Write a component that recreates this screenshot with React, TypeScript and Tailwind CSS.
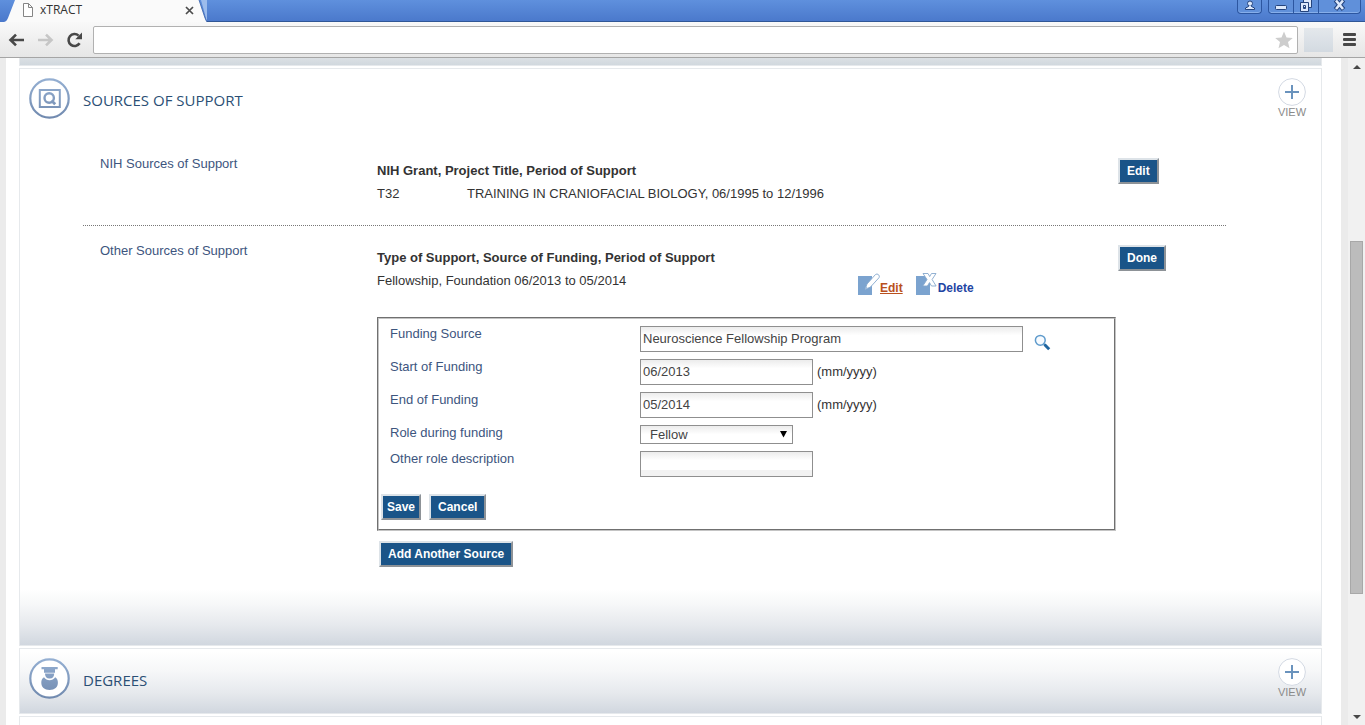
import { useState } from "react";
import type { ReactNode } from "react";

function ActionButton({ children, tight = false }: { children: ReactNode; tight?: boolean }) {
  return (
    <button
      type="button"
      className={`h-[26px] border-2 border-t-[#dde3e8] border-l-[#dde3e8] border-r-[#8d9297] border-b-[#8d9297] bg-[#1a5488] pb-px text-[12px] leading-5 font-bold whitespace-nowrap text-white ${
        tight ? "px-1" : "px-[7px]"
      }`}
    >
      {children}
    </button>
  );
}

function ViewButton() {
  return (
    <button type="button" className="flex w-8 flex-col items-center text-[11px] leading-3 text-[#8a8a8a]">
      <svg width="28" height="28" viewBox="0 0 28 28" aria-hidden="true">
        <circle cx="14" cy="14" r="13.4" fill="#fff" stroke="#d3d9e3" strokeWidth="1" />
        <path d="M7 14h14M14 7v14" stroke="#6a93bd" strokeWidth="2" />
      </svg>
      <span>VIEW</span>
    </button>
  );
}

function SupportIcon() {
  return (
    <svg width="41" height="41" viewBox="0 0 41 41" fill="none" aria-hidden="true">
      <defs>
        <linearGradient id="support" x1="0" y1="0" x2="0" y2="41" gradientUnits="userSpaceOnUse">
          <stop stopColor="#95b0d3" />
          <stop offset="1" stopColor="#7089ae" />
        </linearGradient>
      </defs>
      <circle cx="20.5" cy="20.5" r="19.2" fill="#fff" stroke="url(#support)" strokeWidth="2.2" />
      <path d="M10.8 12h20v17h-20z" stroke="url(#support)" strokeWidth="2" />
      <circle cx="20.2" cy="20" r="4.7" stroke="url(#support)" strokeWidth="2.4" />
      <path d="M22.4 22.4l3.8 3.8" stroke="url(#support)" strokeWidth="2.8" />
    </svg>
  );
}

function DegreeIcon() {
  return (
    <svg width="41" height="41" viewBox="0 0 41 41" fill="none" aria-hidden="true">
      <defs>
        <linearGradient id="degree" x1="0" y1="0" x2="0" y2="41" gradientUnits="userSpaceOnUse">
          <stop stopColor="#95b0d3" />
          <stop offset="1" stopColor="#7089ae" />
        </linearGradient>
      </defs>
      <circle cx="20.5" cy="20.5" r="19.2" fill="#fff" stroke="url(#degree)" strokeWidth="2.2" />
      <path d="M12.500 9h16.200v2.200H26v3.600H15v-3.600h-2.500z" fill="url(#degree)" />
      <path d="M16 15.600h9.200c0 3-1.500 5-4.600 5s-4.600-2-4.600-5z" fill="url(#degree)" />
      <path d="M15 19.300c1.300 2 3.400 2.900 5.600 2.900s4.300-.9 5.600-2.900c2 1.200 2.700 3.200 2.700 5.500 0 4.400-3.200 7.200-8.300 7.200s-8.300-2.800-8.300-7.200c0-2.300.7-4.300 2.700-5.500z" fill="url(#degree)" />
    </svg>
  );
}

function SectionHeader({ title, icon }: { title: string; icon: ReactNode }) {
  return (
    <header className="flex items-start pt-[9px] pr-[13px] pl-[9px]">
      {icon}
      <h2 className="mt-2.5 ml-[13px] font-['Open_Sans','Noto_Sans',sans-serif] text-[15px] leading-6 text-[#2b4f75]">
        {title}
      </h2>
      <div className="ml-auto">
        <ViewButton />
      </div>
    </header>
  );
}

const boxClass =
  "h-[26px] border border-[#8f8f8f] bg-linear-to-b from-[#ececec] to-white to-35% px-0.5 pb-0.5 text-[13px] text-[#444]";
const labelClass = "w-[250px] shrink-0 text-[#3d557e]";

function BrowserBar() {
  return (
    <div className="shrink-0">
      <div className="flex h-[22px] items-stretch bg-linear-to-b from-[#5f90dd] to-[#4a78cb]">
        <svg width="14" height="22" viewBox="0 0 14 22" className="ml-1" aria-hidden="true">
          <path d="M0 22c2-.6 3-1.500 4-4L11 0h3v22z" fill="#fafafa" />
        </svg>
        <div className="flex w-[180px] items-center bg-[#fafafa] pr-1 pb-0.5 pl-1">
          <svg width="12" height="14" viewBox="0 0 12 14" fill="#fff" stroke="#858585" aria-hidden="true">
            <path d="M1.500.5h5l4 4v9h-9zM6.500.5v4h4" />
          </svg>
          <span className="ml-1.5 font-['Open_Sans','Noto_Sans',sans-serif] text-[12px] leading-4 text-[#333]">xTRACT</span>
          <button type="button" aria-label="Close tab" className="ml-auto">
            <svg width="9" height="9" viewBox="0 0 9 9" stroke="#4c4c4c" strokeWidth="1.700" aria-hidden="true">
              <path d="M1 1l7 7M8 1L1 8" />
            </svg>
          </button>
        </div>
        <svg width="9" height="22" viewBox="0 0 9 22" aria-hidden="true">
          <path d="M3 0h6v22z" fill="#9cbcec" />
          <path d="M0 0h1l6 18c.5 2 1 3 2 4H0z" fill="#fafafa" />
          <path d="M1 0l6 18 2 4" fill="none" stroke="#3c64a9" strokeWidth=".8" />
        </svg>
        <div className="flex grow items-start justify-end border-b border-[#315796] pr-1">
          <button
            type="button"
            aria-label="Profile"
            className="mr-1.5 flex h-3.5 w-[25px] items-start justify-center rounded-b border border-t-0 border-[#2c56a0] bg-[#6090da] shadow-[inset_0_-1px_0_#86aeea]"
          >
            <svg width="12" height="11" viewBox="0 0 12 11" fill="#dce8fb" stroke="#24437c" aria-hidden="true">
              <path d="M1.500 9.500V8L4.500 6.500h3L10.500 8v1.500z" />
              <circle cx="6" cy="3.500" r="2.500" />
              <path d="M5 5.500h2v1.500H5z" stroke="none" />
            </svg>
          </button>
          <div className="flex h-3.5 divide-x divide-[#2c56a0] overflow-hidden rounded-b border border-t-0 border-[#2c56a0] bg-[#6090da] shadow-[inset_0_-1px_0_#86aeea]">
            <button type="button" aria-label="Minimize" className="flex w-[25px] items-start justify-center">
              <svg width="13" height="12" viewBox="0 0 13 12" aria-hidden="true">
                <rect x=".5" y="5.500" width="11" height="4" rx="1" fill="#dce8fb" stroke="#24437c" />
              </svg>
            </button>
            <button type="button" aria-label="Restore" className="flex w-[25px] items-start justify-center">
              <svg width="14" height="13" viewBox="0 0 14 13" fill="#dce8fb" stroke="#24437c" aria-hidden="true">
                <path d="M4.500-2.500h8v10h-8z" />
                <path d="M1.500 2.500h8v9h-8zM4.500 5.500h2v3h-2z" fillRule="evenodd" />
              </svg>
            </button>
            <button type="button" aria-label="Close window" className="flex w-[41px] items-start justify-center">
              <svg width="14" height="11" viewBox="0 0 14 11" aria-hidden="true">
                <path d="M2.500 0l8 9.500M10.500 0l-8 9.500" stroke="#24437c" strokeWidth="4.600" />
                <path d="M3 .5L10 9M10 .5L3 9" stroke="#dce8fb" strokeWidth="2.600" />
              </svg>
            </button>
          </div>
        </div>
      </div>
      <div className="flex h-9 items-center border-b border-[#a5a5a5] bg-linear-to-b from-[#f9f9f9] to-[#e6e6e6] pr-[9px] pl-2">
        <button type="button" aria-label="Back">
          <svg width="17" height="14" viewBox="0 0 17 14" fill="none" stroke="#484848" strokeWidth="2.600" aria-hidden="true">
            <path d="M16 7H3M8 1.600L2.500 7 8 12.400" />
          </svg>
        </button>
        <button type="button" aria-label="Forward" className="ml-3">
          <svg width="17" height="14" viewBox="0 0 17 14" fill="none" stroke="#c6c6c6" strokeWidth="2.600" aria-hidden="true">
            <path d="M1 7h13M9 1.600L14.500 7 9 12.400" />
          </svg>
        </button>
        <button type="button" aria-label="Reload" className="ml-3">
          <svg width="17" height="16" viewBox="0 0 17 16" aria-hidden="true">
            <path d="M13.600 11.300A6 6 0 1 1 12.600 3.600" fill="none" stroke="#484848" strokeWidth="2.600" />
            <path d="M16 .5v6.700H9.300z" fill="#484848" />
          </svg>
        </button>
        <div className="ml-2.5 flex h-7 grow items-center rounded-xs border border-[#b1b1b1] bg-white pr-1">
          <input aria-label="Address" className="h-full min-w-0 grow px-2 text-[13px] outline-none" />
          <button type="button" aria-label="Bookmark">
            <svg width="18" height="18" viewBox="0 0 18 18" fill="#cdcdcd" aria-hidden="true">
              <path d="M9 .5l2.500 5.900 6.300.5-4.800 4.100 1.500 6.300L9 14l-5.500 3.300L5 11 .2 6.900l6.300-.5z" />
            </svg>
          </button>
        </div>
        <div className="ml-1.5 h-6 w-[29px] bg-linear-to-b from-[#e4e8ec] to-[#d3dae1]" />
        <button type="button" aria-label="Menu" className="ml-2.5">
          <svg width="13" height="13" viewBox="0 0 13 13" fill="#484848" aria-hidden="true">
            <rect width="13" height="3" rx="1" />
            <rect y="5" width="13" height="3" rx="1" />
            <rect y="10" width="13" height="3" rx="1" />
          </svg>
        </button>
      </div>
    </div>
  );
}

function ScrollBar() {
  return (
    <div className="flex w-[17px] shrink-0 flex-col items-center bg-[#f1f1f1]">
      <button type="button" aria-label="Scroll up" className="flex h-[17px] w-full items-center justify-center">
        <svg width="8" height="4" viewBox="0 0 8 4" fill="#484848" aria-hidden="true">
          <path d="M4 0l4 4H0z" />
        </svg>
      </button>
      <div className="grow-[167]" />
      <div className="w-[13px] grow-[352] border border-[#a8a8a8] bg-[#bcbcbc]" />
      <div className="grow-[114]" />
      <button type="button" aria-label="Scroll down" className="flex h-[17px] w-full items-center justify-center">
        <svg width="8" height="4" viewBox="0 0 8 4" fill="#484848" aria-hidden="true">
          <path d="M4 4L0 0h8z" />
        </svg>
      </button>
    </div>
  );
}

function FundingForm() {
  const [source, setSource] = useState("Neuroscience Fellowship Program");
  const [start, setStart] = useState("06/2013");
  const [end, setEnd] = useState("05/2014");
  const [role, setRole] = useState("Fellow");
  const [other, setOther] = useState("");
  return (
    <form className="mt-[21px] border-2 border-[#c4c4c4] pt-[7px] pb-[9px] leading-[15px] [border-style:groove]">
      <div className="flex flex-col gap-[7px] pl-[11px]">
        <div className="flex">
          <label htmlFor="source" className={labelClass}>Funding Source</label>
          <input id="source" value={source} onChange={(e) => setSource(e.target.value)} className={`w-[383px] ${boxClass}`} />
          <button type="button" aria-label="Search funding source" className="mt-2 ml-[11px] self-start">
            <svg width="17" height="17" viewBox="0 0 17 17" fill="none" aria-hidden="true">
              <circle cx="6.300" cy="6.300" r="4.900" fill="#f7fbff" stroke="#5f9bcc" strokeWidth="1.500" />
              <path d="M9.500 9.500l1.500 1.500" stroke="#5f9bcc" strokeWidth="1.500" />
              <path d="M10.500 10.500l4.700 4.700" stroke="#1f659f" strokeWidth="3" />
            </svg>
          </button>
        </div>
        <div className="flex">
          <label htmlFor="start" className={labelClass}>Start of Funding</label>
          <input id="start" value={start} onChange={(e) => setStart(e.target.value)} className={`w-[173px] ${boxClass}`} />
          <span className="mt-[5px] ml-1">(mm/yyyy)</span>
        </div>
        <div className="flex">
          <label htmlFor="end" className={labelClass}>End of Funding</label>
          <input id="end" value={end} onChange={(e) => setEnd(e.target.value)} className={`w-[173px] ${boxClass}`} />
          <span className="mt-[5px] ml-1">(mm/yyyy)</span>
        </div>
        <div className="flex">
          <label htmlFor="role" className={labelClass}>Role during funding</label>
          <div className="grid">
            <select
              id="role"
              value={role}
              onChange={(e) => setRole(e.target.value)}
              className="col-start-1 row-start-1 h-[19px] w-[153px] appearance-none border border-[#8f8f8f] bg-linear-to-b from-[#ececec] to-white to-50% pl-[9px] text-[13px] leading-4 text-[#444]"
            >
              <option>Fellow</option>
              <option>Scholar</option>
              <option>Other</option>
            </select>
            <svg width="7" height="7" viewBox="0 0 7 7" className="pointer-events-none col-start-1 row-start-1 mt-1.5 mr-1.5 justify-self-end" aria-hidden="true">
              <path d="M0 0h7L3.500 6.500z" />
            </svg>
          </div>
        </div>
        <div className="flex">
          <label htmlFor="other" className={labelClass}>Other role description</label>
          <input
            id="other"
            value={other}
            onChange={(e) => setOther(e.target.value)}
            className={`w-[173px] ${boxClass} shadow-[inset_0_-6px_0_#f2f2f2]`}
          />
        </div>
      </div>
      <div className="mt-[17px] flex gap-2 pl-0.5">
        <ActionButton tight>Save</ActionButton>
        <ActionButton>Cancel</ActionButton>
      </div>
    </form>
  );
}

export default function App() {
  return (
    <div className="flex h-screen flex-col overflow-hidden bg-white font-['Liberation_Sans',Arial,sans-serif] text-[13px] text-[#333]">
      <BrowserBar />
      <div className="flex min-h-0 grow">
        <div className="w-1.5 shrink-0 bg-[#ebebeb]" />
        <main className="flex min-w-0 grow flex-col gap-0.5 overflow-hidden pr-[19px] pl-[13px]">
          <div className="h-2 shrink-0 border-x border-b border-[#e6e9ec] bg-linear-to-b from-[#dbe0e4] to-[#d1d8de]" />
          <section className="shrink-0 border border-[#e6e9ec] bg-[linear-gradient(to_top,#d1d7df_0,#e6e9ed_20px,#f6f7f8_40px,#fff_56px)] pb-[78px]">
            <SectionHeader title="SOURCES OF SUPPORT" icon={<SupportIcon />} />
            <div className="mt-5 mr-[95px] ml-[63px]">
              <div className="flex h-[87px] border-b border-dotted border-[#777] pl-[17px]">
                <h3 className="w-[277px] shrink-0 pt-[15px] leading-5 text-[#3d557e]">NIH Sources of Support</h3>
                <div className="grow pt-5 leading-[23px]">
                  <h4 className="font-bold">NIH Grant, Project Title, Period of Support</h4>
                  <p className="flex">
                    <span className="w-[90px]">T32</span>
                    <span>TRAINING IN CRANIOFACIAL BIOLOGY, 06/1995 to 12/1996</span>
                  </p>
                </div>
                <div className="w-[108px] shrink-0 pt-[19px]">
                  <ActionButton>Edit</ActionButton>
                </div>
              </div>
              <div className="flex pl-[17px]">
                <h3 className="w-[277px] shrink-0 pt-[15px] leading-5 text-[#3d557e]">Other Sources of Support</h3>
                <div className="mr-0.5 grow pt-5 leading-[23px]">
                  <h4 className="font-bold">Type of Support, Source of Funding, Period of Support</h4>
                  <div className="flex items-start">
                    <p className="w-[481px]">Fellowship, Foundation 06/2013 to 05/2014</p>
                    <a href="#edit" className="mt-1 flex items-end text-[12px] leading-4 font-bold text-[#b9501d] underline">
                      <svg width="22" height="23" viewBox="0 0 22 23" aria-hidden="true">
                        <path d="M0 3h14v19H0z" fill="#7ba3cf" />
                        <path d="M7 16.500l2-5.500 8.500-9.500q1.500-1.200 3 .2t.5 3l-8.500 9.300z" fill="#fff" stroke="#86a8cd" strokeWidth=".9" />
                        <path d="M7 16.500l1-3 2 1.800z" fill="#9fbbdb" />
                      </svg>
                      <span>Edit</span>
                    </a>
                    <a href="#delete" className="mt-1 ml-[13px] flex items-end text-[12px] leading-4 font-bold text-[#1f45a3]">
                      <svg width="22" height="23" viewBox="0 0 22 23" aria-hidden="true">
                        <path d="M0 3h14v19H0z" fill="#7ba3cf" />
                        <path d="M7 .5h5l1.700 3 1.800-3h4.500l-3.900 6 4 6.500h-4.600l-2-3.400L11.400 13H6.800l4.200-6.500z" fill="#fff" stroke="#86a8cd" strokeWidth=".9" />
                      </svg>
                      <span>Delete</span>
                    </a>
                  </div>
                  <FundingForm />
                  <div className="mt-2.5 ml-0.5 flex">
                    <ActionButton>Add Another Source</ActionButton>
                  </div>
                </div>
                <div className="w-[108px] shrink-0 pt-[19px]">
                  <ActionButton>Done</ActionButton>
                </div>
              </div>
            </div>
          </section>
          <section className="h-[66px] shrink-0 border border-[#e6e9ec] bg-[linear-gradient(to_top,#d1d7df_0,#e6e9ed_20px,#f6f7f8_42px,#fff_62px)]">
            <SectionHeader title="DEGREES" icon={<DegreeIcon />} />
          </section>
          <section className="h-16 shrink-0 border border-[#e6e9ec]" />
        </main>
        <div className="w-[7px] shrink-0 bg-[#ebebeb]" />
        <ScrollBar />
      </div>
    </div>
  );
}
